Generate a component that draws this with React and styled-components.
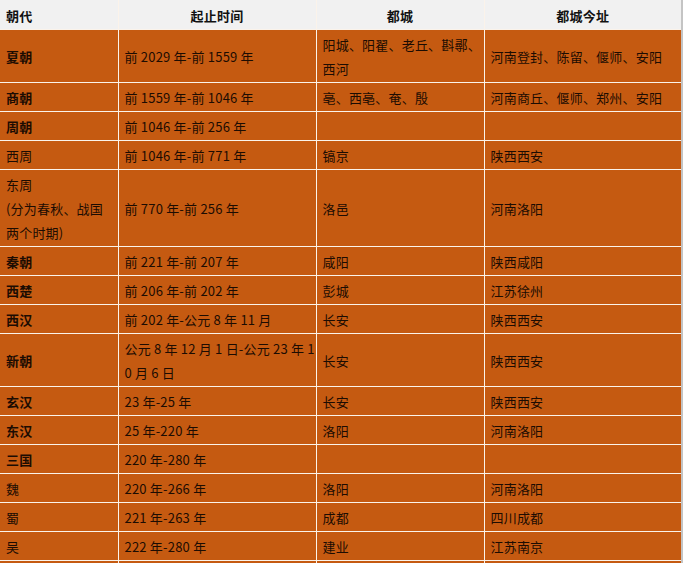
import React from 'react';
import styled, { createGlobalStyle } from 'styled-components';

const GlobalStyle = createGlobalStyle`
  html, body {
    margin: 0;
    padding: 0;
    overflow: hidden;
    background: #ffffff;
  }
`;

const Page = styled.div`
  width: 683px;
  height: 563px;
  overflow: hidden;
  box-sizing: border-box;
  border-right: 2px solid #c4c4c4;
  background: #c55a11;
`;

const Table = styled.table`
  width: 681px;
  table-layout: fixed;
  border-collapse: collapse;
  font-family: "Noto Sans CJK SC", "Noto Sans", sans-serif;
  font-size: 13px;
  letter-spacing: 0.2px;
  color: #1c0c02;
`;

const HeadCell = styled.th`
  background: #f1f1f1;
  color: #111;
  font-weight: bold;
  text-align: ${p => (p.$left ? 'left' : 'center')};
  line-height: 24px;
  padding: 4px 6px 1px;
  border-left: 1px solid #fbf3ea;
  border-bottom: 1px solid #fbf3ea;
  &:first-child {
    border-left: none;
  }
`;

const Cell = styled.td`
  background: #c55a11;
  font-weight: ${p => (p.$bold ? 'bold' : 'normal')};
  line-height: 24px;
  padding: 3px 6px 1px;
  vertical-align: middle;
  white-space: nowrap;
  border-left: 1px solid #fbf3ea;
  border-bottom: 1px solid #fbf3ea;
  &:first-child {
    border-left: none;
  }
`;

const rows = [
  { name: ['夏朝'], bold: true, time: ['前 2029 年-前 1559 年'], capital: ['阳城、阳翟、老丘、斟鄩、', '西河'], site: ['河南登封、陈留、偃师、安阳'] },
  { name: ['商朝'], bold: true, time: ['前 1559 年-前 1046 年'], capital: ['亳、西亳、奄、殷'], site: ['河南商丘、偃师、郑州、安阳'] },
  { name: ['周朝'], bold: true, time: ['前 1046 年-前 256 年'], capital: [], site: [] },
  { name: ['西周'], time: ['前 1046 年-前 771 年'], capital: ['镐京'], site: ['陕西西安'] },
  { name: ['东周', '(分为春秋、战国', '两个时期)'], time: ['前 770 年-前 256 年'], capital: ['洛邑'], site: ['河南洛阳'] },
  { name: ['秦朝'], bold: true, time: ['前 221 年-前 207 年'], capital: ['咸阳'], site: ['陕西咸阳'] },
  { name: ['西楚'], bold: true, time: ['前 206 年-前 202 年'], capital: ['彭城'], site: ['江苏徐州'] },
  { name: ['西汉'], bold: true, time: ['前 202 年-公元 8 年 11 月'], capital: ['长安'], site: ['陕西西安'] },
  { name: ['新朝'], bold: true, time: ['公元 8 年 12 月 1 日-公元 23 年 1', '0 月 6 日'], capital: ['长安'], site: ['陕西西安'] },
  { name: ['玄汉'], bold: true, time: ['23 年-25 年'], capital: ['长安'], site: ['陕西西安'] },
  { name: ['东汉'], bold: true, time: ['25 年-220 年'], capital: ['洛阳'], site: ['河南洛阳'] },
  { name: ['三国'], bold: true, time: ['220 年-280 年'], capital: [], site: [] },
  { name: ['魏'], time: ['220 年-266 年'], capital: ['洛阳'], site: ['河南洛阳'] },
  { name: ['蜀'], time: ['221 年-263 年'], capital: ['成都'], site: ['四川成都'] },
  { name: ['吴'], time: ['222 年-280 年'], capital: ['建业'], site: ['江苏南京'] },
  { name: [], time: [], capital: [], site: [] },
];

const Lines = ({ lines }) =>
  lines.length === 0
    ? '\u00a0'
    : lines.map((l, i) => (
        <React.Fragment key={i}>
          {i > 0 && <br />}
          {l}
        </React.Fragment>
      ));

export default function App() {
  return (
    <Page>
      <GlobalStyle />
      <Table>
        <colgroup>
          <col style={{ width: 118 }} />
          <col style={{ width: 198 }} />
          <col style={{ width: 168 }} />
          <col style={{ width: 197 }} />
        </colgroup>
        <thead>
          <tr>
            <HeadCell $left>朝代</HeadCell>
            <HeadCell>起止时间</HeadCell>
            <HeadCell>都城</HeadCell>
            <HeadCell>都城今址</HeadCell>
          </tr>
        </thead>
        <tbody>
          {rows.map((r, i) => (
            <tr key={i}>
              <Cell $bold={r.bold}><Lines lines={r.name} /></Cell>
              <Cell><Lines lines={r.time} /></Cell>
              <Cell><Lines lines={r.capital} /></Cell>
              <Cell><Lines lines={r.site} /></Cell>
            </tr>
          ))}
        </tbody>
      </Table>
    </Page>
  );
}
